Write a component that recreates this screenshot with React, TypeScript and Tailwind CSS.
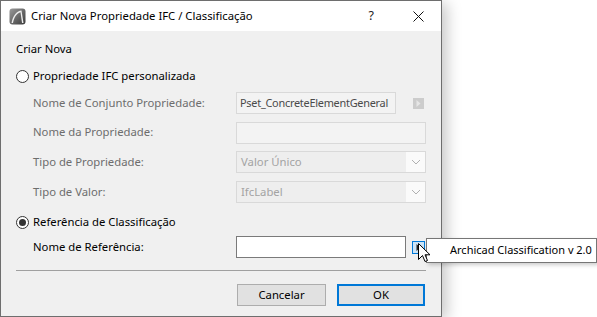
import React from "react";

const F = { fontFamily: '"Noto Sans", "Open Sans", sans-serif' };

function Radio({ checked }: { checked?: boolean }) {
  return (
    <span className="w-[13px] h-[13px] rounded-full border border-[#333333] bg-white flex items-center justify-center shrink-0">
      {checked && <span className="w-[7px] h-[7px] rounded-full bg-[#333333]" />}
    </span>
  );
}

function Chevron() {
  return (
    <svg width="10" height="6" viewBox="0 0 10 6">
      <path d="M1 1 L5 5 L9 1" fill="none" stroke="#b0b0b0" strokeWidth="1" />
    </svg>
  );
}

export default function App() {
  return (
    <div className="w-[597px] h-[317px] bg-white relative overflow-hidden text-[11.3px]" style={F}>
      <div className="w-[442px] h-[317px] border border-[#6e6e6e] bg-[#f0f0f0] flex flex-col shadow-[5px_3px_14px_rgba(0,0,0,0.22)]">
        {/* title bar */}
        <div className="h-[30px] bg-white flex items-center shrink-0">
          <svg className="ml-[8px]" width="17" height="17" viewBox="0 0 17 17">
            <defs>
              <linearGradient id="g" x1="0" y1="0" x2="1" y2="1">
                <stop offset="0" stopColor="#9a9a9a" />
                <stop offset="1" stopColor="#3a3a3a" />
              </linearGradient>
            </defs>
            <rect x="0.5" y="0.5" width="16" height="16" rx="3" fill="url(#g)" />
            <path d="M2.5 15 C4 7 8 3 12.5 2.5 L14.5 15 L13 15 L11.5 4.2 C8 5 5 9 4 15 Z" fill="#ededed" />
          </svg>
          <span className="ml-[5px] text-[11.3px] text-black whitespace-nowrap">Criar Nova Propriedade IFC / Classificação</span>
          <span className="ml-auto mr-[39px] text-[12.5px] text-[#222]">?</span>
          <svg className="mr-[17px]" width="11" height="11" viewBox="0 0 11 11">
            <path d="M0.5 0.5 L10.5 10.5 M10.5 0.5 L0.5 10.5" stroke="#111" strokeWidth="1" />
          </svg>
        </div>

        {/* body */}
        <div className="flex flex-col pl-[15px] pr-[15px]">
          <div className="h-[16px] mt-[10px] flex items-center text-black">Criar Nova</div>

          <div className="h-[16px] mt-[11px] flex items-center gap-[4px] text-black">
            <Radio />
            <span>Propriedade IFC personalizada</span>
          </div>

          <div className="flex flex-col gap-[7.7px] mt-[8px] text-[#6d6d6d]">
            <div className="h-[22px] flex items-center">
              <span className="w-[220px] shrink-0 pl-[17px] whitespace-nowrap">Nome de Conjunto Propriedade:</span>
              <div className="w-[160px] h-[22px] border border-[#d9d9d9] bg-[#f3f3f3] flex items-center pl-[3px] text-[#4a4a4a] text-[10.9px] tracking-[-0.25px] whitespace-nowrap overflow-hidden">
                Pset_ConcreteElementGeneral
              </div>
              <div className="ml-[17px] w-[11px] h-[11px] bg-[#cccccc] flex items-center justify-center">
                <svg width="5" height="7" viewBox="0 0 5 7"><path d="M0.5 0 L4.5 3.5 L0.5 7 Z" fill="#e6e6e6" /></svg>
              </div>
            </div>
            <div className="h-[22px] flex items-center">
              <span className="w-[220px] shrink-0 pl-[17px]">Nome da Propriedade:</span>
              <div className="w-[190px] h-[22px] border border-[#d9d9d9] bg-[#f3f3f3]" />
            </div>
            <div className="h-[22px] flex items-center">
              <span className="w-[220px] shrink-0 pl-[17px]">Tipo de Propriedade:</span>
              <div className="w-[190px] h-[22px] border border-[#d9d9d9] bg-[#fafafa] flex">
                <div className="flex-1 bg-[#eeeeee] flex items-center pl-[4px] text-[#a3a3a3]">Valor Único</div>
                <div className="w-[19px] flex items-center justify-center"><Chevron /></div>
              </div>
            </div>
            <div className="h-[22px] flex items-center">
              <span className="w-[220px] shrink-0 pl-[17px]">Tipo de Valor:</span>
              <div className="w-[190px] h-[22px] border border-[#d9d9d9] bg-[#fafafa] flex">
                <div className="flex-1 bg-[#eeeeee] flex items-center pl-[4px] text-[#a3a3a3]">IfcLabel</div>
                <div className="w-[19px] flex items-center justify-center"><Chevron /></div>
              </div>
            </div>
          </div>

          <div className="h-[16px] mt-[11px] flex items-center gap-[4px] text-black">
            <Radio checked />
            <span>Referência de Classificação</span>
          </div>

          <div className="h-[22px] mt-[6px] flex items-center text-black">
            <span className="w-[220px] shrink-0 pl-[17px]">Nome de Referência:</span>
            <div className="w-[170px] h-[22px] border border-[#7a7a7a] bg-white" />
            <div className="ml-[6px] w-[13px] h-[13px] border border-[#0078d7] bg-[#cce4f7] flex items-center justify-center">
              <svg width="5" height="7" viewBox="0 0 5 7"><path d="M0.5 0 L4.5 3.5 L0.5 7 Z" fill="#222" /></svg>
            </div>
          </div>

          <div className="h-px bg-[#a0a0a0] mt-[12px]" />

          <div className="flex justify-end gap-[11px] mt-[13px] pr-[1px]">
            <button className="w-[89px] h-[22px] border border-[#adadad] bg-[#e1e1e1] text-black flex items-center justify-center" style={F}>Cancelar</button>
            <button className="w-[88px] h-[22px] border-2 border-[#0078d7] bg-[#e1e1e1] text-black flex items-center justify-center" style={F}>OK</button>
          </div>
        </div>
      </div>

      {/* tooltip */}
      <div className="absolute left-[426px] top-[238px] w-[171px] h-[25px] bg-white border border-[#767676] shadow-[2px_2px_4px_rgba(0,0,0,0.2)] flex items-center pl-[23px] text-black text-[11px] whitespace-nowrap">
        Archicad Classification v 2.0
      </div>

      {/* cursor */}
      <svg className="absolute left-[418px] top-[243px]" width="13" height="21" viewBox="0 0 13 21">
        <path d="M0.5 0.5 L0.5 16.5 L4.5 12.5 L7 18.5 L9.5 17.5 L7 11.8 L12 11.8 Z" fill="#fff" stroke="#000" strokeWidth="1" strokeLinejoin="miter" />
      </svg>
    </div>
  );
}
